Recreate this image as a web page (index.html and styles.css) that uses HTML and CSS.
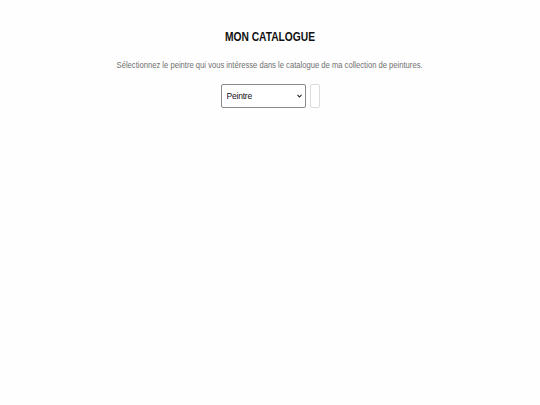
FILE: index.html
```html
<!DOCTYPE html>
<html lang="fr">
<head>
<meta charset="utf-8">
<title>Mon catalogue</title>
<link rel="stylesheet" href="styles.css">
</head>
<body>
<main class="page">
  <h1 class="title"><span class="narrow">MON CATALOGUE</span></h1>
  <p class="intro"><span class="narrow">Sélectionnez le peintre qui vous intéresse dans le catalogue de ma collection de peintures.</span></p>
  <form class="picker">
    <div class="select-wrap">
      <select class="select">
        <option>Peintre</option>
      </select>
      <svg class="chev" width="5" height="4" viewBox="0 0 5 4" aria-hidden="true"><path d="M0.5 0.8 L2.5 3 L4.5 0.8" fill="none" stroke="#222" stroke-width="1.1"/></svg>
    </div>
    <button type="button" class="btn"></button>
  </form>
</main>
</body>
</html>
```
FILE: styles.css
```css
html, body {
  margin: 0;
  padding: 0;
  background: #fefefe;
}
body {
  font-family: "Liberation Sans", Arial, sans-serif;
  color: #111;
}
.page {
  display: flex;
  flex-direction: column;
  align-items: center;
  padding-top: 30px;
}
.narrow {
  display: inline-block;
  transform: scaleX(0.82);
  transform-origin: center;
  white-space: nowrap;
}
.title {
  margin: 0;
  font-size: 12.5px;
  font-weight: bold;
  line-height: 15px;
  color: #111;
}
.intro {
  margin: 14px 0 0;
  font-size: 9.3px;
  line-height: 12px;
  color: #707070;
}
.picker {
  display: flex;
  gap: 4px;
  margin-top: 13px;
}
.select-wrap {
  position: relative;
  display: flex;
}
.select {
  appearance: none;
  -webkit-appearance: none;
  width: 85px;
  height: 24px;
  font-family: "Liberation Sans", Arial, sans-serif;
  font-size: 8.5px;
  letter-spacing: -0.2px;
  color: #111;
  background: #fff;
  border: 1px solid #8a8a8a;
  border-radius: 2px;
  padding: 0 10px 0 5px;
}
.chev {
  position: absolute;
  right: 4px;
  top: 10px;
  pointer-events: none;
}
.btn {
  width: 10px;
  height: 24px;
  padding: 0;
  background: #fff;
  border: 1px solid #dcdcdc;
  border-radius: 2px;
}
```
